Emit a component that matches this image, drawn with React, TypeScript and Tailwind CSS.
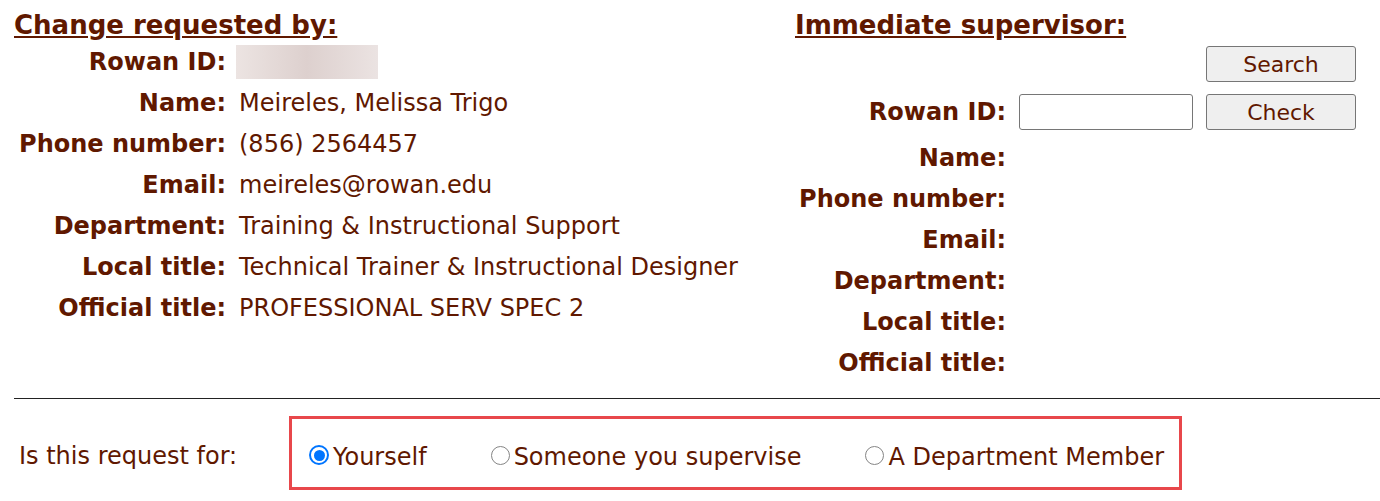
const font = { fontFamily: '"DejaVu Sans", Verdana, sans-serif' };

const requester: [string, string][] = [
  ["Name:", "Meireles, Melissa Trigo"],
  ["Phone number:", "(856) 2564457"],
  ["Email:", "meireles@rowan.edu"],
  ["Department:", "Training & Instructional Support"],
  ["Local title:", "Technical Trainer & Instructional Designer"],
  ["Official title:", "PROFESSIONAL SERV SPEC 2"],
];

const supervisorLabels = ["Name:", "Phone number:", "Email:", "Department:", "Local title:", "Official title:"];

function Radio({ checked, label }: { checked?: boolean; label: string }) {
  return (
    <label className="flex items-center gap-[4px]">
      {checked ? (
        <span className="w-[20px] h-[20px] rounded-full border-[2px] border-[#0075ff] flex items-center justify-center">
          <span className="w-[11px] h-[11px] rounded-full bg-[#0075ff]" />
        </span>
      ) : (
        <span className="w-[19px] h-[19px] rounded-full border border-[#858585] bg-white" />
      )}
      <span className="pt-[3px]">{label}</span>
    </label>
  );
}

export default function App() {
  return (
    <div className="bg-white w-[1380px] h-[501px] overflow-hidden text-[#601800] text-[24px]" style={font}>
      <div className="flex pl-[14px]">
        {/* requester */}
        <div className="w-[781px]">
          <h2 className="h-[41px] pt-[10px] text-[26px] font-bold underline leading-[30px]">Change requested by:</h2>
          <div className="grid grid-cols-[212px_1fr] gap-x-[13px]">
            <div className="h-[41px] flex items-center justify-end font-bold">Rowan ID:</div>
            <div className="h-[41px] flex items-center">
              <div className="w-[142px] h-[34px] bg-gradient-to-r from-[#ece4e2] via-[#ddd0ce] to-[#ebe3e2] -ml-[3px]" />
            </div>
            {requester.map(([k, v]) => (
              <div key={k} className="contents">
                <div className="h-[41px] flex items-center justify-end font-bold">{k}</div>
                <div className="h-[41px] flex items-center">{v}</div>
              </div>
            ))}
          </div>
        </div>

        {/* supervisor */}
        <div>
          <h2 className="h-[41px] pt-[10px] text-[26px] font-bold underline leading-[30px]">Immediate supervisor:</h2>
          <div className="grid grid-cols-[211px_174px_150px] gap-x-[13px] mt-[5px]">
            <div />
            <div />
            <button className="h-[36px] bg-[#efefef] border border-[#767676] rounded-[3px] text-[22px]">Search</button>
          </div>
          <div className="grid grid-cols-[211px_174px_150px] gap-x-[13px] mt-[12px] items-center">
            <div className="text-right font-bold">Rowan ID:</div>
            <input className="h-[36px] bg-white border border-[#767676] rounded-[3px]" />
            <button className="h-[36px] bg-[#efefef] border border-[#767676] rounded-[3px] text-[22px]">Check</button>
          </div>
          <div className="mt-[7px] w-[211px]">
            {supervisorLabels.map((k) => (
              <div key={k} className="h-[41px] flex items-center justify-end font-bold">{k}</div>
            ))}
          </div>
        </div>
      </div>

      <hr className="ml-[14px] mt-[15px] border-0 border-t border-[#222]" />

      <div className="flex items-center pl-[19px] mt-[17px]">
        <div className="w-[270px] pt-[6px]">Is this request for:</div>
        <div className="h-[74px] border-[3px] border-[#e8474b] pl-[17px] pr-[15px] pt-[4px] flex items-center gap-[64px]">
          <Radio checked label="Yourself" />
          <Radio label="Someone you supervise" />
          <Radio label="A Department Member" />
        </div>
      </div>
    </div>
  );
}
